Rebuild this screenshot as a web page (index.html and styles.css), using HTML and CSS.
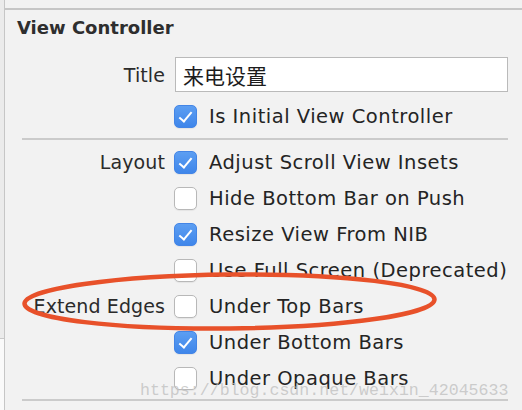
FILE: index.html
```html
<!DOCTYPE html>
<html lang="en">
<head>
  <meta charset="UTF-8">
  <meta name="viewport" content="width=device-width, initial-scale=1.0">
  <title>View Controller</title>
  <link rel="stylesheet" href="styles.css">
</head>
<body>
  <div class="gutter"></div>
  <div class="frame">
    <div class="inspector">
      <h2>View Controller</h2>

      <div class="row field-row">
        <div class="label">Title</div>
        <input class="text-field" type="text" value="来电设置">
      </div>
      <div class="row">
        <div class="label"></div>
        <span class="box checked"></span>
        <span class="text">Is Initial View Controller</span>
      </div>

      <div class="separator"></div>

      <div class="row">
        <div class="label">Layout</div>
        <span class="box checked"></span>
        <span class="text">Adjust Scroll View Insets</span>
      </div>
      <div class="row">
        <div class="label"></div>
        <span class="box"></span>
        <span class="text">Hide Bottom Bar on Push</span>
      </div>
      <div class="row">
        <div class="label"></div>
        <span class="box checked"></span>
        <span class="text">Resize View From NIB</span>
      </div>
      <div class="row">
        <div class="label"></div>
        <span class="box"></span>
        <span class="text">Use Full Screen (Deprecated)</span>
      </div>
      <div class="row">
        <div class="label">Extend Edges</div>
        <span class="box"></span>
        <span class="text">Under Top Bars</span>
      </div>
      <div class="row">
        <div class="label"></div>
        <span class="box checked"></span>
        <span class="text">Under Bottom Bars</span>
      </div>
      <div class="row">
        <div class="label"></div>
        <span class="box"></span>
        <span class="text">Under Opaque Bars</span>
      </div>

      <div class="separator bottom"></div>
    </div>
  </div>

  <!-- hand-drawn annotation on top of the screenshot -->
  <svg class="annotation" width="522" height="410" viewBox="0 0 522 410">
    <ellipse cx="229.5" cy="301.5" rx="205" ry="27" fill="none" stroke="#e8512a" stroke-width="4.5" transform="rotate(-0.6 229.5 301.5)"/>
  </svg>
  <div class="watermark">https://blog.csdn.net/weixin_42045633</div>
</body>
</html>
```

FILE: styles.css
```css
body {
  margin: 0;
  padding: 0;
  width: 522px;
  height: 410px;
  overflow: hidden;
  display: flex;
  background-color: #f2f2f2;
  font-family: "DejaVu Sans", sans-serif;
  color: #242424;
  position: relative;
}

.gutter {
  width: 4px;
  height: 100%;
  background: linear-gradient(#ebebeb 0, #ebebeb 338px, #c9c9c9 338px, #c9c9c9 339px, #fafafa 339px);
}

.frame {
  flex: 1;
  border-left: 1px solid #c6c6c6;
  padding-top: 8px;
}

.inspector {
  border-top: 2px solid #c6c6c6;
}

h2 {
  margin: 0;
  padding: 7px 12px 0;
  font-size: 18px;
  line-height: 22px;
  font-weight: 700;
  color: #2e2e2e;
}

.row {
  display: flex;
  align-items: center;
  height: 36px;
}

.field-row {
  height: 35px;
  margin-top: 18px;
  margin-bottom: 6px;
}

.label {
  width: 160px;
  flex: none;
  margin-right: 9px;
  text-align: right;
  font-size: 19px;
  letter-spacing: 0.1px;
  color: #2b2b2b;
}

.text-field {
  box-sizing: border-box;
  width: 333px;
  height: 35px;
  margin: 0 0 0 1px;
  padding: 0 7px;
  border: 1px solid #bababa;
  background-color: #ffffff;
  font-family: "Noto Sans CJK SC", sans-serif;
  font-size: 21px;
  color: #1c1c1c;
  outline: none;
}

.box {
  box-sizing: border-box;
  width: 23px;
  height: 23px;
  flex: none;
  border: 1px solid #b8b8b8;
  border-radius: 5px;
  background-color: #ffffff;
  box-shadow: 0 1px 1px rgba(0, 0, 0, 0.06);
  position: relative;
}

.box.checked {
  border: 1px solid #4385e6;
  background: linear-gradient(#5c9ef2, #3f86ea);
}

.box.checked::after {
  content: "";
  position: absolute;
  left: 7px;
  top: 3px;
  width: 5px;
  height: 11px;
  border: solid #ffffff;
  border-width: 0 2.5px 2.5px 0;
  transform: rotate(40deg);
}

.text {
  margin-left: 12px;
  font-size: 19.5px;
  letter-spacing: 0.5px;
  white-space: nowrap;
}

.separator {
  height: 2px;
  width: 486px;
  margin: 4px 0 4px 17px;
  background-color: #cbcbcb;
}

.separator.bottom {
  margin-top: 3px;
}

.annotation {
  position: absolute;
  left: 0;
  top: 0;
  pointer-events: none;
}

.watermark {
  position: absolute;
  left: 140px;
  top: 381px;
  font-family: "Liberation Mono", monospace;
  font-size: 16.6px;
  color: rgba(190, 190, 190, 0.75);
  pointer-events: none;
  white-space: nowrap;
}
```
